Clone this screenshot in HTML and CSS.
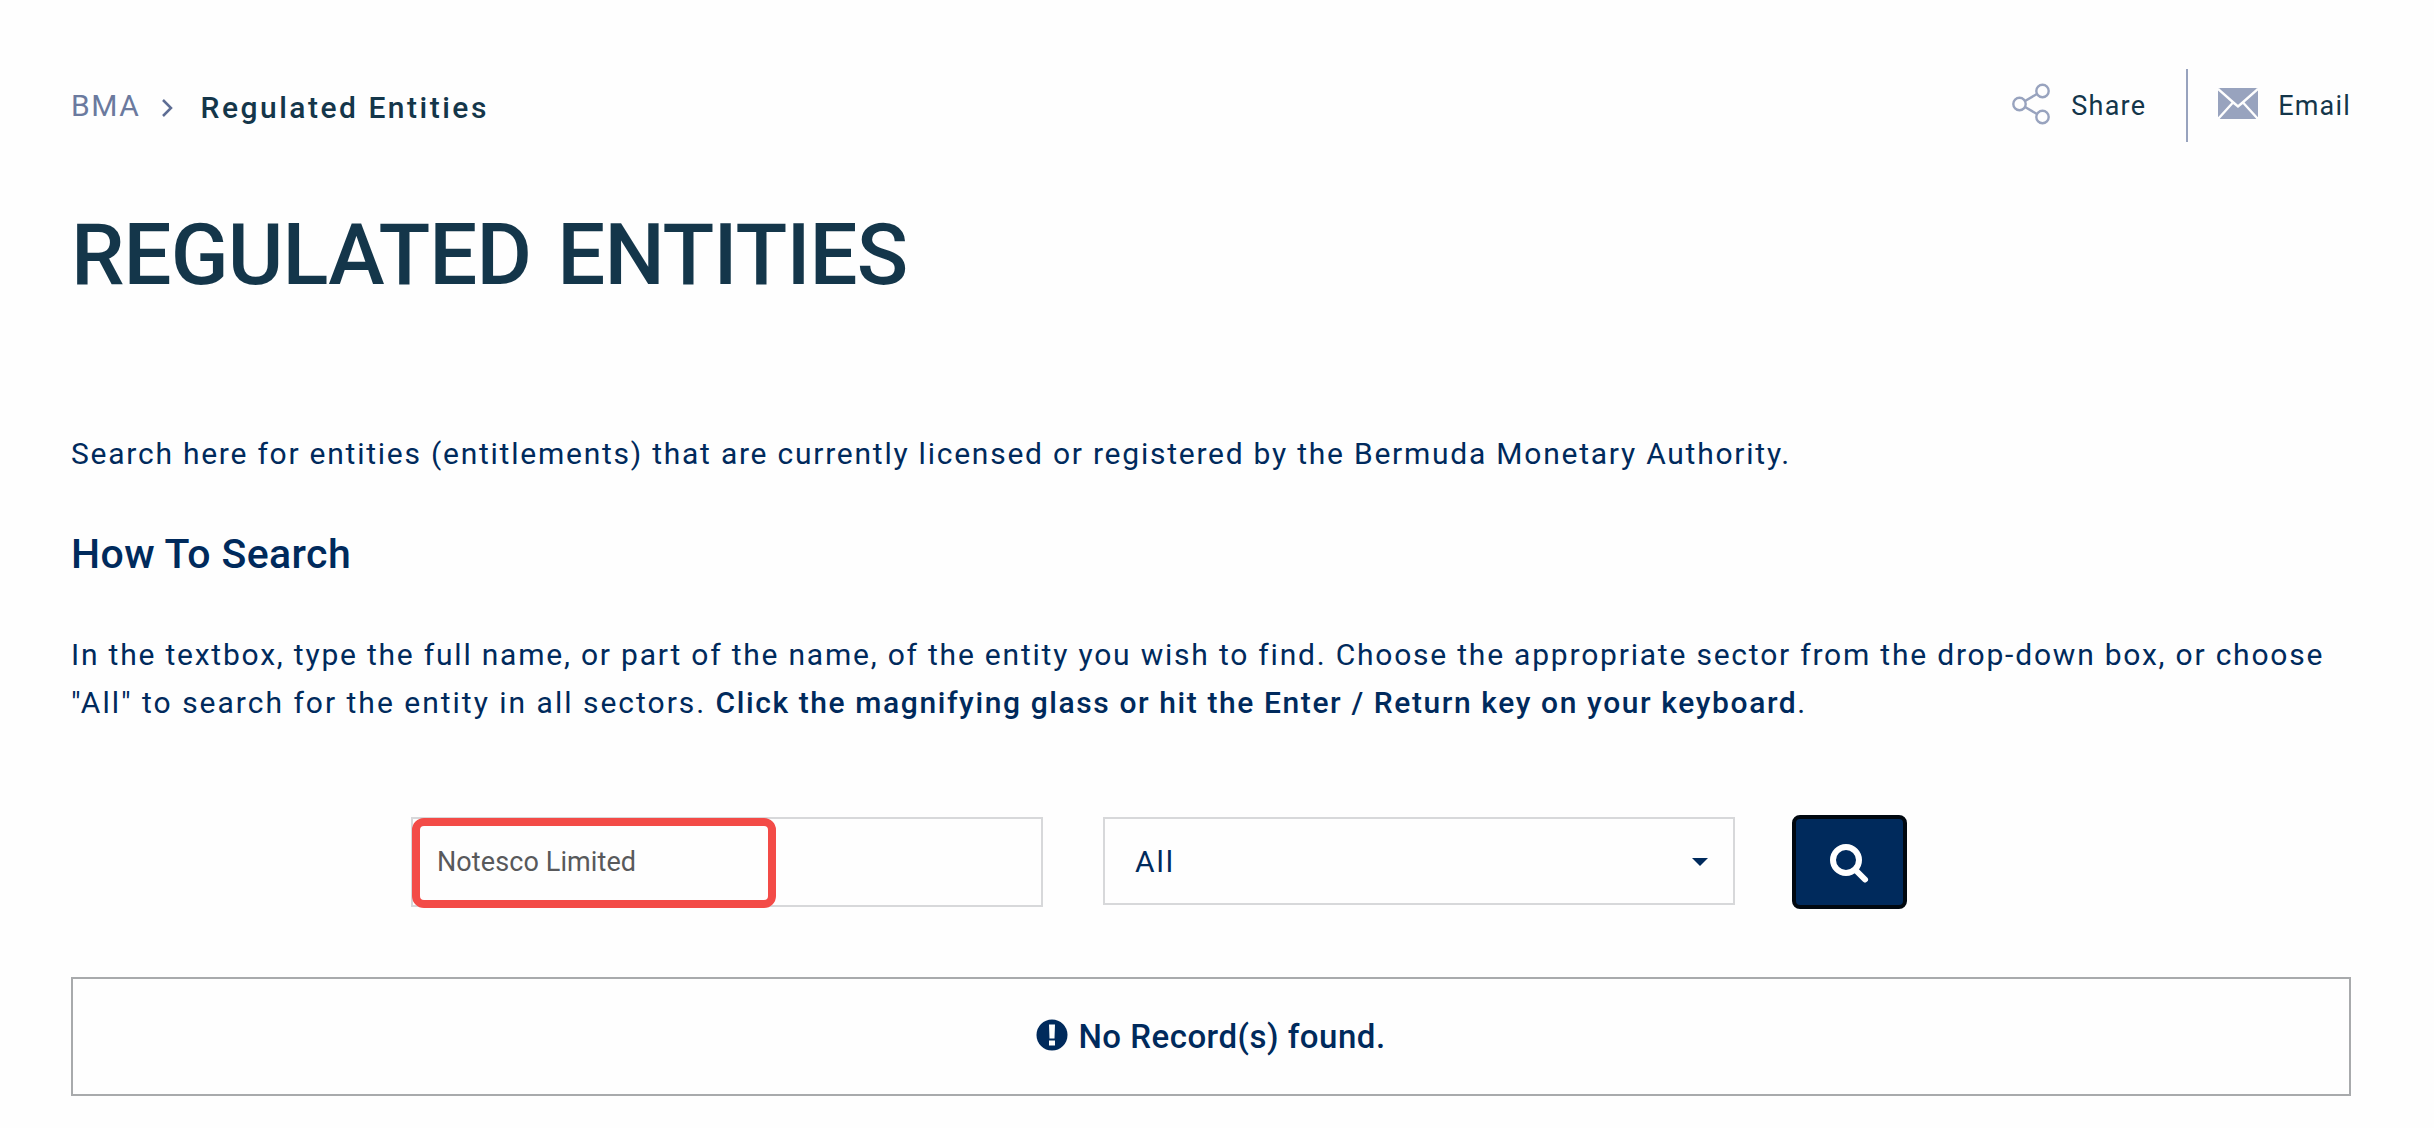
FILE: index.html
```
<!DOCTYPE html>
<html lang="en">
<head>
  <meta charset="UTF-8">
  <meta name="viewport" content="width=device-width, initial-scale=1.0">
  <title>Regulated Entities - BMA</title>
  <link rel="stylesheet" href="styles.css">
</head>
<body>
  <div class="page">
    <!-- Breadcrumb + page tools -->
    <div class="top-bar">
      <nav class="breadcrumb">
        <a class="breadcrumb-link" href="#">BMA</a>
        <svg class="chevron" viewBox="0 0 12 20"><path d="M2 2l8 8-8 8"/></svg>
        <span class="breadcrumb-current">Regulated Entities</span>
      </nav>
      <div class="page-tools">
        <a class="tool share" href="#">
          <svg class="share-icon" viewBox="0 0 40 42">
            <path d="M14 18L26 11M14 24l12 7"/>
            <circle cx="8.5" cy="21" r="6.2"/>
            <circle cx="31.5" cy="8" r="6.2"/>
            <circle cx="31.5" cy="34" r="6.2"/>
          </svg>
          <span>Share</span>
        </a>
        <a class="tool email" href="#">
          <svg class="email-icon" viewBox="0 0 40 31">
            <rect width="40" height="31" rx="2"/>
            <path d="M0 1l16.500 14.500 3.500 3 3.500-3L40 1M0 31l15-16.500M40 31L25 14.500"/>
          </svg>
          <span>Email</span>
        </a>
      </div>
    </div>

    <h1 class="page-title">REGULATED ENTITIES</h1>

    <p class="text intro">Search here for entities (entitlements) that are currently licensed or registered by the Bermuda Monetary Authority.</p>
    <h2 class="section-title">How To Search</h2>
    <p class="text">In the textbox, type the full name, or part of the name, of the entity you wish to find. Choose the appropriate sector from the drop-down box, or choose<br><span class="scope">"All" to search for the entity in all sectors.</span> <strong>Click the magnifying glass or hit the Enter / Return key on your keyboard</strong>.</p>

    <!-- Search form -->
    <form class="search-form">
      <div class="search-field">
        <span class="search-value">Notesco Limited</span>
        <div class="highlight"></div>
      </div>
      <div class="sector-select">
        <span>All</span>
        <span class="caret"></span>
      </div>
      <button class="search-button" type="button" aria-label="Search">
        <svg class="search-icon" viewBox="0 0 40 40"><circle cx="16" cy="16" r="13"/><path d="M25.500 26l9.500 9.500"/></svg>
      </button>
    </form>

    <!-- Results -->
    <div class="results">
      <svg class="alert-icon" viewBox="0 0 32 32"><circle cx="16" cy="16" r="15.500"/><path d="M13 5.500h6l-.5 14h-5zM13 21.500h6v5h-6z"/></svg>
      <span>No Record(s) found.</span>
    </div>
  </div>
</body>
</html>
```
FILE: styles.css
```
* {
  box-sizing: border-box;
}

body {
  margin: 0;
  background: #fefefe;
  color: #002a5c;
  font-family: Roboto, "Liberation Sans", sans-serif;
}

a {
  color: inherit;
  text-decoration: none;
}

.page {
  padding: 69px 83px 0 71px;
}

.top-bar {
  display: flex;
  justify-content: space-between;
  height: 73px;
}

.breadcrumb {
  display: flex;
  align-items: center;
  font-size: 30px;
  line-height: 40px;
}

.breadcrumb-link {
  color: #6b7a9e;
  letter-spacing: 1.6px;
}

.chevron {
  width: 12px;
  height: 20px;
  margin: 5px 28px 0 20px;
  fill: none;
  stroke: #5d6d94;
  stroke-width: 2.5;
}

.breadcrumb-current {
  margin-top: 4px;
  color: #14364a;
  font-weight: 500;
  letter-spacing: 2.5px;
}

.page-tools {
  display: flex;
  color: #14364a;
  font-size: 27px;
  letter-spacing: 1.2px;
}

.tool {
  display: flex;
  align-items: center;
}

.share {
  padding-right: 40px;
  border-right: 2px solid #98a3be;
}

.share-icon {
  width: 40px;
  height: 42px;
  margin: -4px 20px 0 0;
  fill: none;
  stroke: #98a3be;
  stroke-width: 2.4;
}

.email {
  padding-left: 30px;
}

.email-icon {
  width: 40px;
  height: 31px;
  margin: -4px 20px 0 0;
  fill: #98a3be;
}

.email-icon path {
  fill: none;
  stroke: #fefefe;
  stroke-width: 2.4;
}

.page-title {
  margin: 62px 0 0;
  color: #14364a;
  font-size: 85px;
  font-weight: 500;
  line-height: 102px;
  letter-spacing: -0.9px;
  word-spacing: 6px;
}

.text {
  margin: 0;
  font-size: 30px;
  line-height: 48px;
  letter-spacing: 1.79px;
  white-space: nowrap;
}

.text .scope {
  letter-spacing: 2px;
}

.text strong {
  font-weight: 500;
  letter-spacing: 1.6px;
}

.text.intro {
  margin-top: 124px;
  letter-spacing: 1.76px;
}

.section-title {
  margin: 50px 0 51px;
  font-size: 41px;
  font-weight: 500;
  line-height: 52px;
  letter-spacing: 0.4px;
}

.search-form {
  display: flex;
  align-items: flex-start;
  margin: 88px 0 0 340px;
}

.search-field,
.sector-select {
  display: flex;
  align-items: center;
  width: 632px;
  border: 2px solid #d7d8da;
}

.search-field {
  position: relative;
  height: 90px;
  margin: 2px 60px 0 0;
  padding-left: 24px;
  color: #58595b;
  font-size: 27px;
  letter-spacing: 0.1px;
}

.highlight {
  position: absolute;
  top: -1px;
  left: -1px;
  width: 364px;
  height: 90px;
  border: 8px solid #f34b47;
  border-radius: 12px;
}

.sector-select {
  justify-content: space-between;
  height: 88px;
  margin: 2px 57px 0 0;
  padding: 0 25px 0 30px;
  font-size: 30px;
  letter-spacing: 2px;
}

.caret {
  margin-top: 1px;
  border: 8px solid transparent;
  border-top-color: #002a5c;
  border-bottom: 0;
}

.search-button {
  display: flex;
  align-items: center;
  justify-content: center;
  width: 115px;
  height: 94px;
  padding: 4px 0 0;
  border: 4px solid #000810;
  border-radius: 8px;
  background: #002a5c;
}

.search-icon {
  width: 40px;
  height: 40px;
  fill: none;
  stroke: #fff;
  stroke-width: 6;
  stroke-linecap: round;
}

.results {
  display: flex;
  align-items: center;
  justify-content: center;
  height: 119px;
  margin-top: 68px;
  border: 2px solid #a8aaac;
  font-size: 33px;
  font-weight: 500;
  letter-spacing: 0.5px;
}

.alert-icon {
  width: 32px;
  height: 32px;
  margin: -4px 10px 0 0;
  fill: #002a5c;
}

.alert-icon path {
  fill: #fefefe;
}
```
